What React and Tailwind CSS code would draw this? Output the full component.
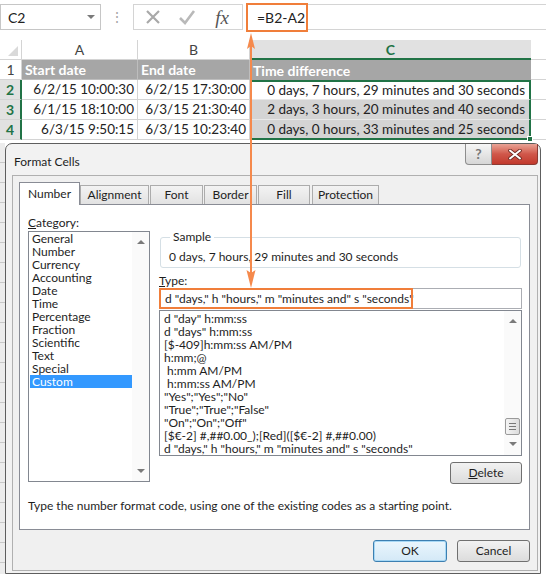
import React from 'react';

const categories = ['General', 'Number', 'Currency', 'Accounting', 'Date', 'Time', 'Percentage', 'Fraction', 'Scientific', 'Text', 'Special', 'Custom'];

const formats = [
  'd "day" h:mm:ss',
  'd "days" h:mm:ss',
  '[$-409]h:mm:ss AM/PM',
  'h:mm;@',
  ' h:mm AM/PM',
  ' h:mm:ss AM/PM',
  '"Yes";"Yes";"No"',
  '"True";"True";"False"',
  '"On";"On";"Off"',
  '[$€-2] #,##0.00_);[Red]([$€-2] #,##0.00)',
  'd "days," h "hours," m "minutes and" s "seconds"',
];

const rows = [
  ['6/2/15 10:00:30', '6/2/15 17:30:00', '0 days, 7 hours, 29 minutes and 30 seconds'],
  ['6/1/15 18:10:00', '6/3/15 21:30:40', '2 days, 3 hours, 20 minutes and 40 seconds'],
  ['6/3/15 9:50:15', '6/3/15 10:23:40', '0 days, 0 hours, 33 minutes and 25 seconds'],
];

const tabs = [
  { label: 'Alignment', w: 'w-[69px]', ml: 'ml-0' },
  { label: 'Font', w: 'w-[53px]', ml: 'ml-[1px]' },
  { label: 'Border', w: 'w-[53px]', ml: 'ml-[1px]' },
  { label: 'Fill', w: 'w-[52px]', ml: 'ml-[1px]' },
  { label: 'Protection', w: 'w-[67px]', ml: 'ml-[2px]' },
];

const UpArrow = () => (
  <div className="h-0 w-0 border-x-[4px] border-b-[4px] border-x-transparent border-b-[#7a7a7a]" />
);

const DownArrow = () => (
  <div className="h-0 w-0 border-x-[4px] border-t-[4px] border-x-transparent border-t-[#7a7a7a]" />
);

const FormulaBar = () => (
  <div className="flex h-[34px] items-center">
    <div className="flex h-[26px] w-[101px] items-center justify-between border border-[#c6c6c6] pl-[7px] pr-[5px] text-[14px] text-[#222]">
      <span>C2</span>
      <DownArrow />
    </div>
    <div className="flex w-[32px] justify-center text-[14px] leading-none text-[#a6a6a6]">⋮</div>
    <div className="flex h-[26px] w-[110px] items-center border border-[#d4d4d4]">
      <div className="flex w-[38px] justify-center">
        <svg width="16" height="16" viewBox="0 0 16 16">
          <path d="M2 2 L14 14 M14 2 L2 14" stroke="#a9a9a9" strokeWidth="2.2" />
        </svg>
      </div>
      <div className="flex w-[30px] justify-center">
        <svg width="18" height="16" viewBox="0 0 18 16">
          <path d="M2 9 L7 14 L16 2" stroke="#b9b9b9" strokeWidth="2.6" fill="none" />
        </svg>
      </div>
      <div className="flex w-[40px] justify-center font-['Liberation_Serif',serif] text-[19px] italic leading-none text-[#555]">
        fx
      </div>
    </div>
    <div className="w-[3px]" />
    <div className="flex h-[29px] w-[62px] items-center border-2 border-[#f07e3a] pl-[9px] text-[14px] text-[#222]">
      =B2-A2
    </div>
    <div className="h-[26px] flex-1 border-y border-[#d4d4d4]" />
  </div>
);

const Sheet = () => (
  <div className="mt-[6px] text-[13.5px]">
    <div className="flex h-[20px]">
      <div className="relative w-[22px] border-b border-r border-[#d4d4d4] bg-white">
        <div className="absolute bottom-[3px] right-[3px] h-0 w-0 border-b-[10px] border-l-[10px] border-b-[#d9d9d9] border-l-transparent" />
      </div>
      <div className="flex w-[116px] items-center justify-center border-b border-r border-[#d4d4d4] bg-white text-[14px] text-[#444]">A</div>
      <div className="flex w-[112px] items-center justify-center border-b border-r border-[#d4d4d4] bg-white text-[14px] text-[#444]">B</div>
      <div className="flex w-[281px] items-center justify-center border-b-2 border-[#217346] bg-[#e1e1e1] text-[14px] font-bold text-[#217346]">C</div>
      <div className="flex-1 border-b border-[#d4d4d4]" />
    </div>
    <div className="flex h-[20px]">
      <div className="flex w-[22px] items-center justify-center border-b border-r border-[#d4d4d4] text-[14px] text-[#444]">1</div>
      <div className="flex w-[116px] items-center border-b border-r border-[#bdbdbd] bg-[#a6a6a6] pl-[3px] text-[14px] font-bold text-white">Start date</div>
      <div className="flex w-[112px] items-center border-b border-r border-[#bdbdbd] bg-[#a6a6a6] pl-[3px] text-[14px] font-bold text-white">End date</div>
      <div className="flex w-[281px] items-center bg-[#a6a6a6] pl-[3px] text-[14px] font-bold text-white">Time difference</div>
      <div className="flex-1 border-b border-[#d4d4d4]" />
    </div>
    {rows.map((r, i) => (
      <div key={i} className="flex h-[20px]">
        <div className="flex w-[22px] items-center justify-center border-b border-r-2 border-b-[#d4d4d4] border-r-[#217346] bg-[#e1e1e1] text-[14px] font-bold text-[#217346]">
          {i + 2}
        </div>
        <div className="flex w-[116px] items-center justify-end border-b border-r border-[#d4d4d4] pr-[3px] text-[#222]">{r[0]}</div>
        <div className="flex w-[112px] items-center justify-end border-b border-r border-[#d4d4d4] pr-[3px] text-[#222]">{r[1]}</div>
        <div
          className={`relative flex w-[281px] items-center justify-end border-x-2 border-x-[#217346] pr-[4px] text-[#222] ${
            i === 0 ? 'border-t-2 border-t-[#217346] bg-white' : 'bg-[#d4d4d4]'
          } ${i === 2 ? 'border-b-2 border-b-[#217346]' : 'border-b border-b-[#e8e8e8]'}`}
        >
          {r[2]}
          {i === 2 && <div className="absolute -bottom-[4px] -right-[4px] h-[6px] w-[6px] border border-white bg-[#217346]" />}
        </div>
        <div className="flex-1 border-b border-[#d4d4d4]" />
      </div>
    ))}
  </div>
);

const Dialog = () => (
  <div className="mt-[3px] flex">
    <div className="w-[5px]">
      {Array.from({ length: 22 }).map((_, i) => (
        <div key={i} className="h-[20px] border-b border-[#c8c8c8] bg-[#ececec]" />
      ))}
    </div>
    <div className="flex h-[431px] w-[536px] flex-col rounded-t-[7px] border border-[#5e5e5e] bg-[#f2f2f2] pb-[2px] text-[12px] text-[#1e1e1e]">
      <div className="flex h-[31px] justify-between pr-[2px]">
        <div className="pl-[8px] pt-[11px] leading-[14px]">Format Cells</div>
        <div className="flex items-start">
          <div className="flex h-[21px] w-[27px] items-center justify-center rounded-bl-[4px] border border-t-0 border-[#8d8d8d] bg-gradient-to-b from-[#f6f6f6] to-[#d6d6d6] font-bold text-[14px] leading-none text-[#777]">
            ?
          </div>
          <div className="flex h-[21px] w-[46px] items-center justify-center rounded-br-[4px] border border-l-0 border-t-0 border-[#8b3a32] bg-gradient-to-b from-[#e8a396] via-[#d0574a] to-[#c2392c]">
            <svg width="14" height="11" viewBox="0 0 14 11">
              <path d="M2 1.5 L12 9.5 M12 1.5 L2 9.5" stroke="#6d2a22" strokeWidth="3.6" strokeLinecap="round" />
              <path d="M2 1.5 L12 9.5 M12 1.5 L2 9.5" stroke="#ffffff" strokeWidth="2" strokeLinecap="round" />
            </svg>
          </div>
        </div>
      </div>
      <div className="ml-[6px] mr-[2px] flex-1 border border-[#b0b0b0] bg-[#f0f0f0] pl-[6px] pt-[6px]">
        <div className="flex h-[22px] items-end">
          <div className="relative z-10 -mb-[1px] flex h-[23px] w-[61px] items-center justify-center border border-b-0 border-[#898c95] bg-white">
            Number
          </div>
          {tabs.map((t) => (
            <div
              key={t.label}
              className={`flex h-[19px] items-center justify-center border border-b-0 border-[#acacac] bg-gradient-to-b from-[#f3f3f3] to-[#e2e2e2] ${t.w} ${t.ml}`}
            >
              {t.label}
            </div>
          ))}
        </div>
        <div className="flex h-[326px] w-[511px] flex-col border border-[#898c95] bg-white pl-[8px] pt-[10px]">
          <div className="flex">
            <div className="flex w-[122px] flex-col">
              <div className="h-[16px] leading-[16px]">
                <span className="underline">C</span>ategory:
              </div>
              <div className="flex h-[251px] border border-[#828790]">
                <div className="flex-1 pl-[1px]">
                  {categories.map((c) => (
                    <div
                      key={c}
                      className={`h-[13px] pl-[2px] leading-[13px] ${c === 'Custom' ? 'bg-[#3399ff] text-white' : ''}`}
                    >
                      {c}
                    </div>
                  ))}
                </div>
                <div className="flex w-[17px] flex-col items-center justify-between bg-[#fafafa] py-[8px]">
                  <UpArrow />
                  <DownArrow />
                </div>
              </div>
            </div>
            <div className="ml-[9px] flex w-[363px] flex-col">
              <fieldset className="ml-[1px] mt-[15px] w-[361px] rounded-[3px] border border-[#d5dfe5] pb-[3px] pl-[8px] pt-[6px]">
                <legend className="ml-[1px] px-[3px] leading-[14px]">Sample</legend>
                <div className="leading-[14px]">0 days, 7 hours, 29 minutes and 30 seconds</div>
              </fieldset>
              <div className="mt-[6px] leading-[14px]">
                <span className="underline">T</span>ype:
              </div>
              <div className="relative flex h-[21px] items-center border border-[#abadb3] pl-[5px] whitespace-pre">
                d "days," h "hours," m "minutes and" s "seconds"
                <div className="absolute -left-[1px] -top-[1px] h-[21px] w-[254px] border-2 border-[#f07e3a]" />
              </div>
              <div className="mt-[1px] flex h-[146px] border border-[#828790]">
                <div className="flex-1 pl-[4px] pt-[1px]">
                  {formats.map((f) => (
                    <div key={f} className="h-[13px] whitespace-pre leading-[13px]">
                      {f}
                    </div>
                  ))}
                </div>
                <div className="flex w-[17px] flex-col items-center bg-[#fafafa] pt-[8px]">
                  <UpArrow />
                  <div className="mt-[95px] flex h-[17px] w-[15px] flex-col items-center justify-center gap-[2px] rounded-[2px] border border-[#9a9a9a] bg-gradient-to-r from-[#f4f4f4] to-[#dcdcdc]">
                    <div className="h-px w-[7px] bg-[#777]" />
                    <div className="h-px w-[7px] bg-[#777]" />
                    <div className="h-px w-[7px] bg-[#777]" />
                  </div>
                  <div className="mt-[7px]">
                    <DownArrow />
                  </div>
                </div>
              </div>
              <div className="mt-[6px] flex justify-end">
                <div className="flex h-[22px] w-[72px] items-center justify-center rounded-[3px] border border-[#707070] bg-gradient-to-b from-[#f2f2f2] to-[#dcdcdc]">
                  <span className="underline">D</span>elete
                </div>
              </div>
            </div>
          </div>
          <div className="mt-[15px] leading-[14px]">
            Type the number format code, using one of the existing codes as a starting point.
          </div>
        </div>
        <div className="mt-[10px] flex w-[511px] justify-end gap-[10px]">
          <div className="flex h-[22px] w-[74px] items-center justify-center rounded-[3px] border border-[#3c7fb1] bg-gradient-to-b from-[#eaf6fd] to-[#d4e9f7] shadow-[inset_0_0_0_1px_#a7d8f5]">
            OK
          </div>
          <div className="flex h-[22px] w-[73px] items-center justify-center rounded-[3px] border border-[#707070] bg-gradient-to-b from-[#f2f2f2] to-[#dcdcdc]">
            Cancel
          </div>
        </div>
      </div>
    </div>
  </div>
);

export default function App() {
  return (
    <div className="relative h-[574px] w-[546px] overflow-hidden bg-white font-['Lato','Noto_Sans',sans-serif]">
      <FormulaBar />
      <Sheet />
      <Dialog />
      <svg className="pointer-events-none absolute left-0 top-0 z-20" width="546" height="574" viewBox="0 0 546 574">
        <line x1="251" y1="44" x2="251" y2="274" stroke="#f5894c" strokeWidth="2" />
        <path d="M251 33 L255 49 L251 46 L247 49 Z" fill="#f5894c" />
        <path d="M251 288 L255.5 270 L251 273 L246.5 270 Z" fill="#f5894c" />
      </svg>
    </div>
  );
}
